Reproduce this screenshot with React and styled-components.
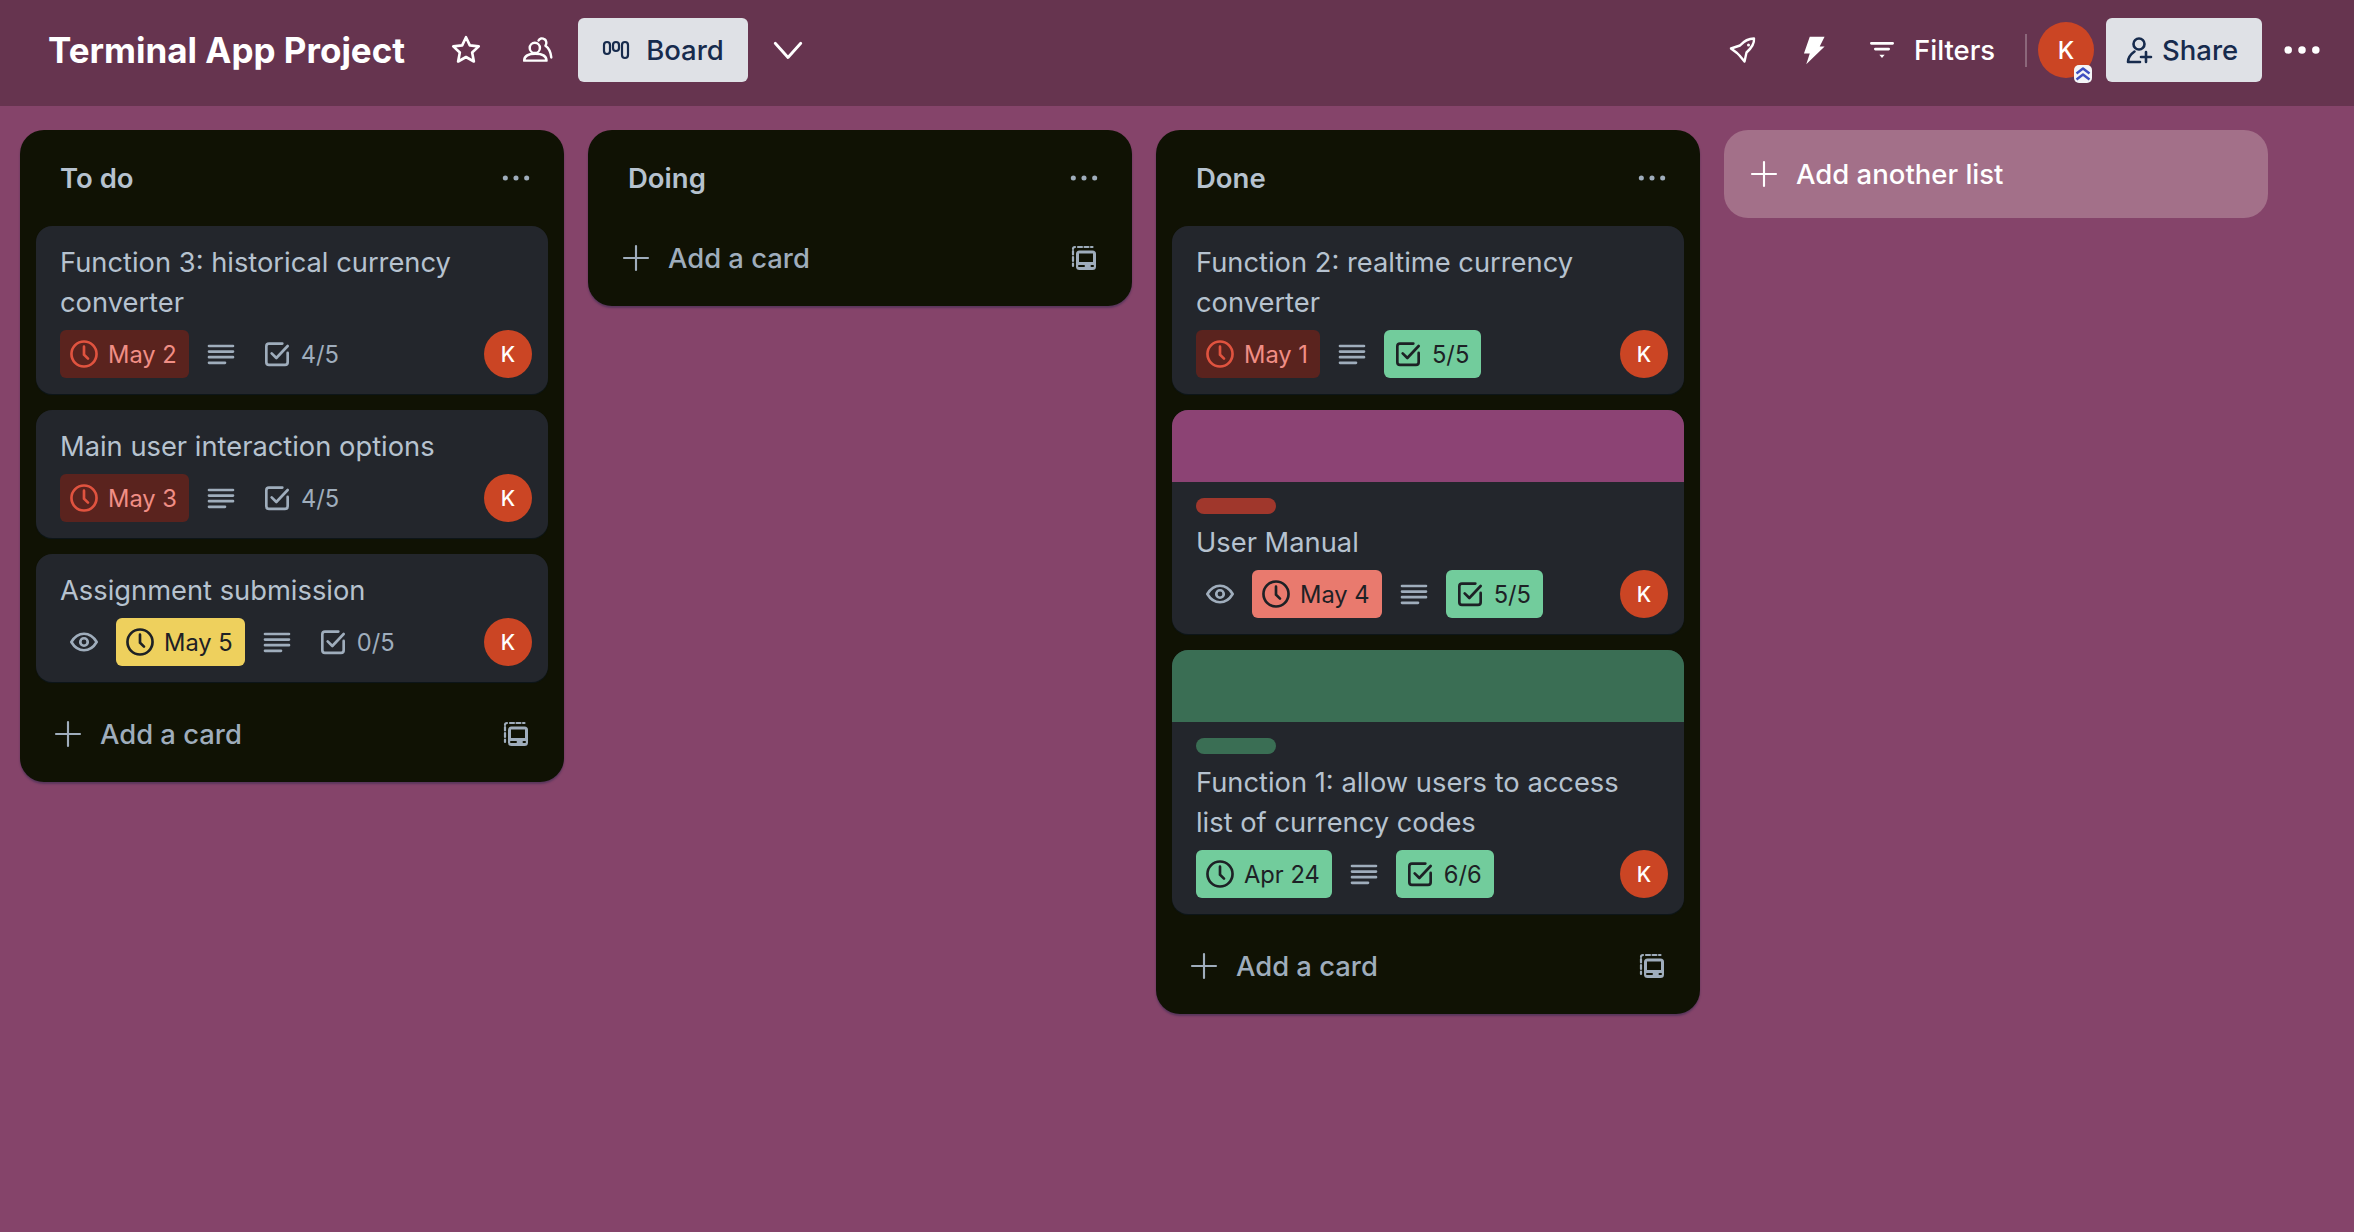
import styled, { createGlobalStyle } from "styled-components";

const GlobalStyle = createGlobalStyle`
  html, body { margin: 0; padding: 0; }
  body {
    font-family: Inter, "Liberation Sans", sans-serif;
    background: #85446a;
  }
`;

const Page = styled.div`
  width: 100%;
  height: 100vh;
  overflow: hidden;
  background: #85446a;
  display: flex;
  flex-direction: column;
`;

const Header = styled.header`
  height: 106px;
  flex: none;
  background: #66344f;
  display: flex;
  align-items: center;
  gap: 8px;
  padding: 0 20px 6px 48px;
  box-sizing: border-box;
  color: #fff;
`;

const BoardTitle = styled.h1`
  margin: 0 21px 0 0;
  font-size: 35px;
  font-weight: 700;
  line-height: 64px;
  color: #fff;
  white-space: nowrap;
`;

const IconButton = styled.div`
  width: 64px;
  height: 64px;
  display: flex;
  align-items: center;
  justify-content: center;
  color: #fff;
`;

const LightButton = styled.div`
  height: 64px;
  width: ${({ $w }) => $w}px;
  box-sizing: border-box;
  margin-left: ${({ $ml }) => $ml || 0}px;
  background: #dfe1e6;
  color: #172b4d;
  border-radius: 6px;
  display: flex;
  align-items: center;
  padding-left: ${({ $pad }) => $pad}px;
  gap: ${({ $gap }) => $gap}px;
  font-size: 27.5px;
  font-weight: 500;
`;

const RightGroup = styled.div`
  margin-left: auto;
  display: flex;
  align-items: center;
  gap: 8px;
`;

const FilterButton = styled.div`
  height: 64px;
  width: 157px;
  box-sizing: border-box;
  padding-left: 12px;
  display: flex;
  align-items: center;
  gap: 16px;
  font-size: 27.5px;
  font-weight: 500;
  color: #fff;
`;

const Divider = styled.div`
  width: 2px;
  height: 33px;
  margin: 0 3px 0 6px;
  background: rgba(255, 255, 255, 0.25);
`;

const Avatar = styled.div`
  position: relative;
  flex: none;
  width: ${({ $size }) => $size}px;
  height: ${({ $size }) => $size}px;
  border-radius: 50%;
  background: #cb4524;
  color: #fff;
  display: flex;
  align-items: center;
  justify-content: center;
  font-size: ${({ $size }) => ($size > 50 ? 24 : 21)}px;
  font-weight: 500;
`;

const UpgradeBadge = styled.div`
  position: absolute;
  right: 2px;
  bottom: -5px;
  width: 18px;
  height: 18px;
  background: #f4f5f7;
  border-radius: 5px;
  display: flex;
  align-items: center;
  justify-content: center;
`;

const Board = styled.main`
  flex: 1;
  display: flex;
  align-items: flex-start;
  gap: 24px;
  padding: 24px 20px 0;
  min-height: 0;
`;

const List = styled.section`
  width: 544px;
  flex: none;
  box-sizing: border-box;
  background: #101204;
  border-radius: 24px;
  padding: 0 16px 16px;
  box-shadow: 0 2px 2px rgba(9, 30, 66, 0.35);
`;

const ListHeader = styled.div`
  height: 96px;
  display: flex;
  align-items: center;
  justify-content: space-between;
  padding: 0 16px 0 24px;
`;

const ListTitle = styled.h2`
  margin: 0;
  font-size: 27.5px;
  font-weight: 600;
  color: #b6c2cf;
`;

const Cards = styled.div`
  display: flex;
  flex-direction: column;
  gap: 16px;
  margin-bottom: 20px;
`;

const Card = styled.article`
  background: #23262c;
  border-radius: 16px;
  overflow: hidden;
  box-shadow: 0 1px 1px rgba(9, 30, 66, 0.4);
`;

const Cover = styled.div`
  height: 72px;
  background: ${({ $color }) => $color};
`;

const CardBody = styled.div`
  padding: 16px 16px 16px 24px;
`;

const Label = styled.div`
  width: 80px;
  height: 16px;
  border-radius: 8px;
  margin-bottom: 8px;
  background: ${({ $color }) => $color};
`;

const CardTitle = styled.div`
  font-size: 27.3px;
  line-height: 40px;
  color: #b6c2cf;
  max-width: 440px;
  padding-top: 1px;
  margin-bottom: 7px;
`;

const Badges = styled.div`
  display: flex;
  align-items: center;
  gap: 8px;
`;

const Badge = styled.div`
  height: 48px;
  box-sizing: border-box;
  display: flex;
  align-items: center;
  gap: 8px;
  padding: 0 12px 0 8px;
  border-radius: 6px;
  font-size: 23.7px;
  color: ${({ $fg }) => $fg || "#9fadbc"};
  background: ${({ $bg }) => $bg || "transparent"};
`;

const IconOnly = styled.div`
  width: 48px;
  height: 48px;
  display: flex;
  align-items: center;
  justify-content: center;
  color: #9fadbc;
`;

const AvatarSlot = styled.div`
  margin-left: auto;
`;

const Footer = styled.div`
  height: 64px;
  display: flex;
  align-items: center;
  padding: 0 16px;
  color: #9fadbc;
`;

const AddLabel = styled.span`
  margin-left: 16px;
  font-size: 27.4px;
  font-weight: 500;
`;

const TemplateSlot = styled.div`
  margin-left: auto;
  display: flex;
`;

const AddList = styled.div`
  width: 544px;
  height: 88px;
  flex: none;
  box-sizing: border-box;
  border-radius: 24px;
  background: #a37089;
  color: #fff;
  display: flex;
  align-items: center;
  padding: 0 24px;
  font-size: 27.5px;
  font-weight: 500;
`;

const AddListText = styled.span`
  margin-left: 16px;
`;

const Dots = styled.div`
  display: flex;
  color: #9fadbc;
`;

const Svg = ({ size = 32, children, ...rest }) => (
  <svg width={size} height={size} viewBox="0 0 24 24" fill="none" {...rest}>
    {children}
  </svg>
);

const ClockIcon = ({ color }) => (
  <Svg color={color}>
    <circle cx="12" cy="12" r="9.4" stroke="currentColor" strokeWidth="2" />
    <path d="M12 6.5V12.5L15 15.5" stroke="currentColor" strokeWidth="2" strokeLinecap="round" />
  </Svg>
);

const DescIcon = () => (
  <Svg>
    <path d="M3 6H21M3 10.2H21M3 14.4H21M3 18.6H15" stroke="currentColor" strokeWidth="2" strokeLinecap="round" />
  </Svg>
);

const CheckIcon = () => (
  <Svg>
    <path d="M16 4.2H6a2 2 0 0 0-2 2v12a2 2 0 0 0 2 2h12a2 2 0 0 0 2-2v-7" stroke="currentColor" strokeWidth="2" strokeLinecap="round" />
    <path d="M8 11.5L11.5 15L20 6" stroke="currentColor" strokeWidth="2" strokeLinecap="round" strokeLinejoin="round" />
  </Svg>
);

const EyeIcon = () => (
  <Svg>
    <path d="M2.5 12C5 7.8 8.2 5.8 12 5.8S19 7.8 21.5 12C19 16.2 15.8 18.2 12 18.2S5 16.2 2.5 12Z" stroke="currentColor" strokeWidth="2" strokeLinejoin="round" />
    <circle cx="12" cy="12" r="2.8" stroke="currentColor" strokeWidth="2" />
  </Svg>
);

const PlusIcon = () => (
  <Svg>
    <path d="M12 3V21M3 12H21" stroke="currentColor" strokeWidth="1.6" strokeLinecap="round" />
  </Svg>
);

const TemplateIcon = () => (
  <Svg viewBox="0 0 32 32">
    <path d="M5 21.5V24M5 15V19M5 9V12.5M5 7A2 2 0 0 1 7 5M10 5H14M16.5 5H20.5M23 5H24.5" stroke="currentColor" strokeWidth="2.2" strokeLinecap="round" />
    <rect x="8" y="8.5" width="20" height="19.5" rx="3.5" fill="currentColor" />
    <rect x="11" y="11.5" width="14" height="8.5" fill="#101204" />
    <path d="M11 24H16M23.5 24H25" stroke="#101204" strokeWidth="2" strokeLinecap="round" />
  </Svg>
);

const DotsIcon = () => (
  <Svg>
    <circle cx="4" cy="12" r="1.9" fill="currentColor" />
    <circle cx="12" cy="12" r="1.9" fill="currentColor" />
    <circle cx="20" cy="12" r="1.9" fill="currentColor" />
  </Svg>
);

const MoreIcon = () => (
  <Svg size={36}>
    <circle cx="2.8" cy="12" r="2.5" fill="currentColor" />
    <circle cx="12" cy="12" r="2.5" fill="currentColor" />
    <circle cx="21.2" cy="12" r="2.5" fill="currentColor" />
  </Svg>
);

const StarIcon = () => (
  <Svg size={34} viewBox="1 1 32 32">
    <path d="M17 5L20.6 12.6L29 13.6L22.8 19.4L24.4 27.8L17 23.6L9.6 27.8L11.2 19.4L5 13.6L13.4 12.6Z" stroke="currentColor" strokeWidth="2.5" strokeLinejoin="round" />
  </Svg>
);

const TeamIcon = () => (
  <Svg size={34} viewBox="2 1 32 32">
    <circle cx="15" cy="15" r="4.8" stroke="currentColor" strokeWidth="2.3" />
    <path d="M5 27C5 23 9 20.6 15.5 20.6S26 23 26 27Z" stroke="currentColor" strokeWidth="2.3" strokeLinejoin="round" />
    <path d="M18.5 8C19.5 6 22 5.5 24 6.8C26 8 26.5 11 25 13C28 15 30 19 30.5 24" stroke="currentColor" strokeWidth="2.3" strokeLinecap="round" strokeLinejoin="round" />
  </Svg>
);

const BoardIcon = () => (
  <svg width="28" height="20" viewBox="0 0 28 20" fill="none">
    <rect x="2" y="2" width="6" height="12" rx="3" stroke="currentColor" strokeWidth="2.2" />
    <rect x="11" y="2" width="6" height="9" rx="3" stroke="currentColor" strokeWidth="2.2" />
    <rect x="20" y="2" width="6" height="16" rx="3" stroke="currentColor" strokeWidth="2.2" />
  </svg>
);

const ChevronIcon = () => (
  <Svg size={36}>
    <path d="M3.5 7.5L12 17L20.5 7.5" stroke="currentColor" strokeWidth="1.9" strokeLinecap="round" strokeLinejoin="round" />
  </Svg>
);

const RocketIcon = () => (
  <Svg size={34} viewBox="0 0 34 34">
    <path d="M29 5.5C24 5.5 19 8 15 12.5L6 15.5L12 20L14.5 22.5L19.5 28.5L21.5 19.5C26.5 15 29.5 10.5 29 5.5Z" stroke="currentColor" strokeWidth="2.4" strokeLinejoin="round" />
    <circle cx="23.5" cy="12" r="1.5" fill="currentColor" />
  </Svg>
);

const BoltIcon = () => (
  <Svg size={36} viewBox="0 0 34 34">
    <path d="M13 4.5H27L22.4 13.8H27L9.7 30.5L13 20.3H7.5Z" fill="currentColor" />
  </Svg>
);

const FilterIcon = () => (
  <Svg>
    <path d="M4 7H20M7 11.3H17" stroke="currentColor" strokeWidth="2" strokeLinecap="round" />
    <path d="M10 15.6H14L12 18Z" fill="currentColor" />
  </Svg>
);

const ShareIcon = () => (
  <Svg size={34} viewBox="0 0 34 34">
    <circle cx="17" cy="11" r="5.5" stroke="currentColor" strokeWidth="2.6" />
    <path d="M6 29C6 24 9 21 12.5 18.5M6 29H18" stroke="currentColor" strokeWidth="2.6" strokeLinecap="round" />
    <path d="M24 19V29M19 24H29" stroke="currentColor" strokeWidth="2.6" strokeLinecap="round" />
  </Svg>
);

const UpgradeIcon = () => (
  <svg width="16" height="16" viewBox="0 0 16 16" fill="none">
    <path d="M1.5 7.5L8 2.5L14.5 7.5M1.5 13.5L8 8.5L14.5 13.5" stroke="#3f4fc0" strokeWidth="2.4" strokeLinejoin="round" />
  </svg>
);

const RED_DARK = { bg: "#5a231e", fg: "#f08e85", icon: "#e0533f" };
const RED = { bg: "#e97a6e", fg: "#1d2125", icon: "#1d2125" };
const YELLOW = { bg: "#eed05d", fg: "#1d2125", icon: "#1d2125" };
const GREEN = { bg: "#72cc9c", fg: "#1d2125", icon: "#1d2125" };

const CardItem = ({ card }) => (
  <Card>
    {card.cover && <Cover $color={card.cover} />}
    <CardBody>
      {card.label && <Label $color={card.label} />}
      <CardTitle>{card.title}</CardTitle>
      <Badges>
        {card.watched && (
          <IconOnly>
            <EyeIcon />
          </IconOnly>
        )}
        <Badge $bg={card.due.tone.bg} $fg={card.due.tone.fg}>
          <ClockIcon color={card.due.tone.icon} />
          {card.due.text}
        </Badge>
        <IconOnly>
          <DescIcon />
        </IconOnly>
        <Badge $bg={card.done ? GREEN.bg : null} $fg={card.done ? GREEN.fg : null}>
          <CheckIcon />
          {card.checks}
        </Badge>
        <AvatarSlot>
          <Avatar $size={48}>K</Avatar>
        </AvatarSlot>
      </Badges>
    </CardBody>
  </Card>
);

const lists = [
  {
    title: "To do",
    cards: [
      { title: "Function 3: historical currency converter", due: { text: "May 2", tone: RED_DARK }, checks: "4/5" },
      { title: "Main user interaction options", due: { text: "May 3", tone: RED_DARK }, checks: "4/5" },
      { title: "Assignment submission", watched: true, due: { text: "May 5", tone: YELLOW }, checks: "0/5" },
    ],
  },
  { title: "Doing", cards: [] },
  {
    title: "Done",
    cards: [
      { title: "Function 2: realtime currency converter", due: { text: "May 1", tone: RED_DARK }, checks: "5/5", done: true },
      { title: "User Manual", cover: "#8c4374", label: "#a0372c", watched: true, due: { text: "May 4", tone: RED }, checks: "5/5", done: true },
      { title: "Function 1: allow users to access list of currency codes", cover: "#3a6e54", label: "#3a6e54", due: { text: "Apr 24", tone: GREEN }, checks: "6/6", done: true },
    ],
  },
];

export default function App() {
  return (
    <Page>
      <GlobalStyle />
      <Header>
        <BoardTitle>Terminal App Project</BoardTitle>
        <IconButton>
          <StarIcon />
        </IconButton>
        <IconButton>
          <TeamIcon />
        </IconButton>
        <LightButton $w={170} $pad={24} $gap={16}>
          <BoardIcon />
          Board
        </LightButton>
        <IconButton>
          <ChevronIcon />
        </IconButton>
        <RightGroup>
          <IconButton>
            <RocketIcon />
          </IconButton>
          <IconButton>
            <BoltIcon />
          </IconButton>
          <FilterButton>
            <FilterIcon />
            Filters
          </FilterButton>
          <Divider />
          <Avatar $size={56}>
            K
            <UpgradeBadge>
              <UpgradeIcon />
            </UpgradeBadge>
          </Avatar>
          <LightButton $w={156} $pad={16} $gap={6} $ml={4}>
            <ShareIcon />
            Share
          </LightButton>
          <IconButton>
            <MoreIcon />
          </IconButton>
        </RightGroup>
      </Header>
      <Board>
        {lists.map((list) => (
          <List key={list.title}>
            <ListHeader>
              <ListTitle>{list.title}</ListTitle>
              <Dots>
                <DotsIcon />
              </Dots>
            </ListHeader>
            {list.cards.length > 0 && (
              <Cards>
                {list.cards.map((card) => (
                  <CardItem key={card.title} card={card} />
                ))}
              </Cards>
            )}
            <Footer>
              <PlusIcon />
              <AddLabel>Add a card</AddLabel>
              <TemplateSlot>
                <TemplateIcon />
              </TemplateSlot>
            </Footer>
          </List>
        ))}
        <AddList>
          <PlusIcon />
          <AddListText>Add another list</AddListText>
        </AddList>
      </Board>
    </Page>
  );
}
